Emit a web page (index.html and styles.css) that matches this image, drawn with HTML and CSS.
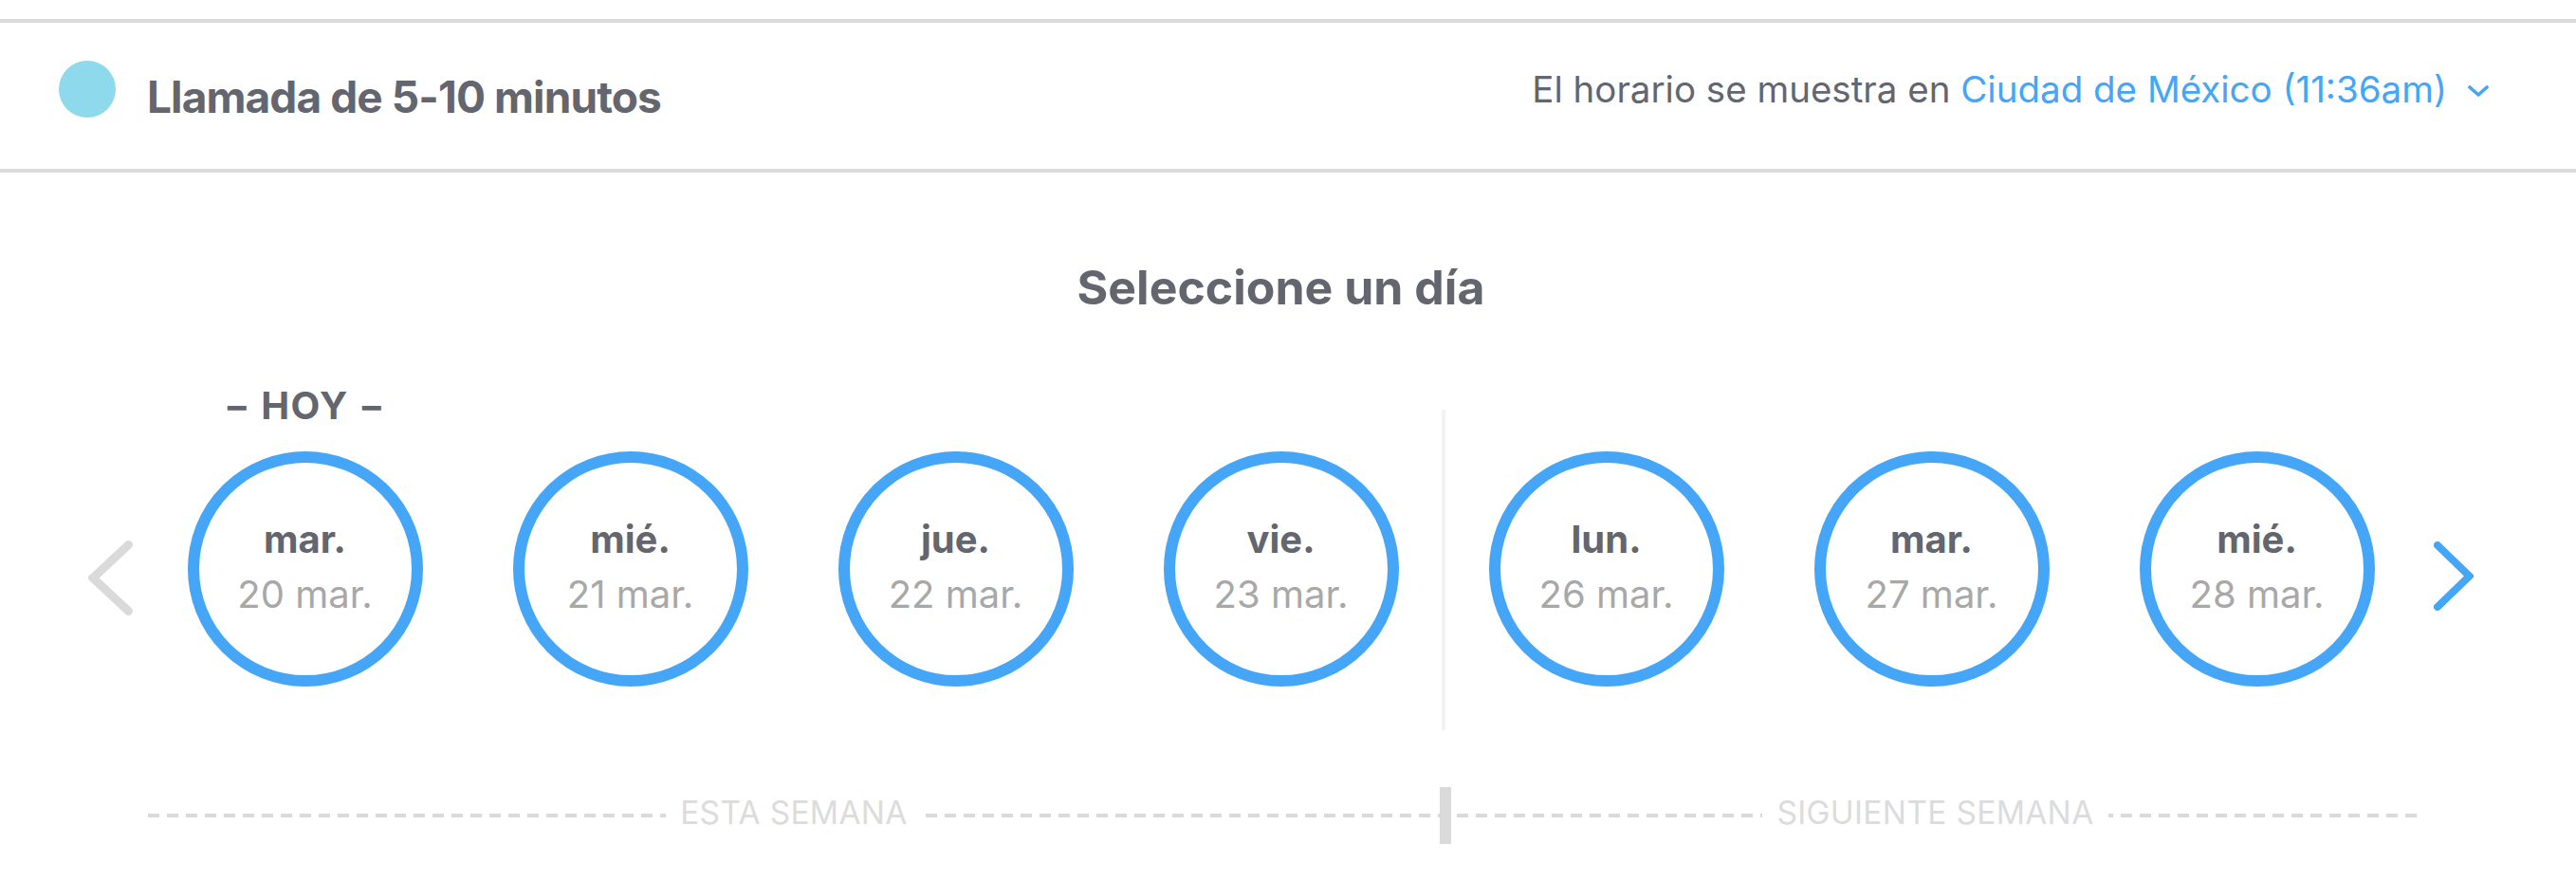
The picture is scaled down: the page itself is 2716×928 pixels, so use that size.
FILE: index.html
```html
<!DOCTYPE html>
<html lang="es">
<head>
<meta charset="utf-8">
<title>Seleccione un día</title>
<link rel="stylesheet" href="styles.css">
</head>
<body>
<header class="header">
  <div class="event">
    <span class="dot"></span>
    <h1 class="title">Llamada de 5-10 minutos</h1>
  </div>
  <div class="tz">El horario se muestra en <span class="tz-link">Ciudad de México (11:36am)</span><svg class="tz-chev" viewBox="0 0 22 12" width="22" height="12"><polyline points="2,2 11,10 20,2" fill="none" stroke="#45a5f6" stroke-width="3.6" stroke-linecap="round" stroke-linejoin="round"/></svg></div>
</header>

<main class="picker">
  <h2 class="heading">Seleccione un día</h2>

  <button class="nav prev" aria-label="Anterior"><svg viewBox="0 0 47 79" width="47" height="79"><polyline points="42.5,4.5 5,39.5 42.5,74.5" fill="none" stroke="#dadada" stroke-width="9" stroke-linecap="round" stroke-linejoin="miter"/></svg></button>

  <div class="days">
    <div class="week week-1">
      <div class="day"><div class="today">– HOY –</div><div class="circle"><span class="dname">mar.</span><span class="ddate">20 mar.</span></div></div>
      <div class="day"><div class="today"></div><div class="circle"><span class="dname">mié.</span><span class="ddate">21 mar.</span></div></div>
      <div class="day"><div class="today"></div><div class="circle"><span class="dname">jue.</span><span class="ddate">22 mar.</span></div></div>
      <div class="day"><div class="today"></div><div class="circle"><span class="dname">vie.</span><span class="ddate">23 mar.</span></div></div>
    </div>
    <div class="week-sep"></div>
    <div class="week week-2">
      <div class="day"><div class="today"></div><div class="circle"><span class="dname">lun.</span><span class="ddate">26 mar.</span></div></div>
      <div class="day"><div class="today"></div><div class="circle"><span class="dname">mar.</span><span class="ddate">27 mar.</span></div></div>
      <div class="day"><div class="today"></div><div class="circle"><span class="dname">mié.</span><span class="ddate">28 mar.</span></div></div>
    </div>
  </div>

  <button class="nav next" aria-label="Siguiente"><svg viewBox="0 0 42 73" width="42" height="73"><polyline points="4,4 37.5,36.5 4,69" fill="none" stroke="#45a5f6" stroke-width="8" stroke-linecap="round" stroke-linejoin="miter"/></svg></button>

  <div class="weekbar">
    <div class="half half-1"><span class="wlabel">ESTA SEMANA</span></div>
    <div class="wdivider"></div>
    <div class="half half-2"><span class="wlabel">SIGUIENTE SEMANA</span></div>
  </div>
</main>
</body>
</html>
```
FILE: styles.css
```css
* { box-sizing: border-box; }

html, body {
  margin: 0;
  padding: 0;
  background: #ffffff;
}

body {
  font-family: Inter, "Open Sans", "Liberation Sans", sans-serif;
  color: #63666e;
  width: 2716px;
}

/* Header */
.header {
  margin-top: 20px;
  height: 162px;
  border-top: 4px solid #dadada;
  border-bottom: 4px solid #dadada;
  display: flex;
  justify-content: space-between;
  align-items: flex-start;
  padding: 0 92px 0 62px;
}

.event {
  display: flex;
  align-items: flex-start;
}

.dot {
  width: 60px;
  height: 60px;
  border-radius: 50%;
  background: #8ed9ec;
  margin-top: 40px;
  flex: none;
}

.title {
  margin: 50px 0 0 33px;
  font-size: 46px;
  line-height: 56px;
  font-weight: 700;
  letter-spacing: -0.9px;
  color: #63666e;
}

.tz {
  margin-top: 47px;
  font-size: 38.5px;
  line-height: 47px;
  color: #63666e;
  display: flex;
  align-items: center;
  white-space: pre;
}

.tz-link {
  color: #45a5f6;
}

.tz-chev {
  margin-left: 22px;
  margin-top: 2px;
}

/* Picker */
.picker {
  display: grid;
  grid-template-columns: 150px 2401px 1fr;
  grid-template-rows: auto auto auto;
}

.heading {
  grid-column: 2;
  grid-row: 1;
  margin: 90px 0 0 0;
  text-align: center;
  font-size: 50px;
  line-height: 62px;
  font-weight: 700;
  color: #63666e;
}

.nav {
  grid-row: 2;
  border: 0;
  background: none;
  padding: 0;
  cursor: pointer;
  align-self: start;
  display: block;
}

.nav svg { display: block; }

.prev {
  grid-column: 1;
  margin: 236px 0 0 93px;
  justify-self: start;
}

.next {
  grid-column: 3;
  margin: 237px 0 0 15px;
  justify-self: start;
}

.days {
  grid-column: 2;
  grid-row: 2;
  margin-top: 70px;
  display: flex;
  align-items: flex-start;
}

.week {
  display: flex;
}

.day {
  width: 343px;
  display: flex;
  flex-direction: column;
  align-items: center;
}

.today {
  height: 48px;
  font-size: 40px;
  line-height: 48px;
  font-weight: 700;
  letter-spacing: 1.5px;
  word-spacing: 3px;
  color: #63666e;
  white-space: nowrap;
}

.circle {
  margin-top: 24px;
  width: 248px;
  height: 248px;
  border: 12px solid #45a5f6;
  border-radius: 50%;
  display: flex;
  flex-direction: column;
  align-items: center;
  justify-content: center;
  padding-bottom: 4px;
}

.dname {
  font-size: 40px;
  line-height: 58px;
  font-weight: 700;
  color: #63666e;
}

.ddate {
  font-size: 40px;
  line-height: 58px;
  font-weight: 400;
  color: #a8a8a8;
}

.week-sep {
  width: 4px;
  height: 338px;
  margin: 28px -2px 0 -2px;
  background: #f2f2f2;
}

/* Week bar */
.weekbar {
  grid-column: 2;
  grid-row: 3;
  margin: 60px 0 0 6px;
  height: 60px;
  display: flex;
  background-image: repeating-linear-gradient(to right, #dadada 0 12px, transparent 12px 20px);
  background-size: 100% 4px;
  background-position: 0 28px;
  background-repeat: no-repeat;
}

.half {
  display: flex;
  align-items: center;
  justify-content: center;
}

.half-1 { width: 1362px; }
.half-2 { flex: 1; }

.wlabel {
  background: #ffffff;
  padding: 0 15px 7px 15px;
  font-size: 33.5px;
  line-height: 40px;
  letter-spacing: 0.3px;
  color: #dcdcdc;
  white-space: nowrap;
}

.wdivider {
  width: 12px;
  height: 60px;
  background: #dadada;
}
```
